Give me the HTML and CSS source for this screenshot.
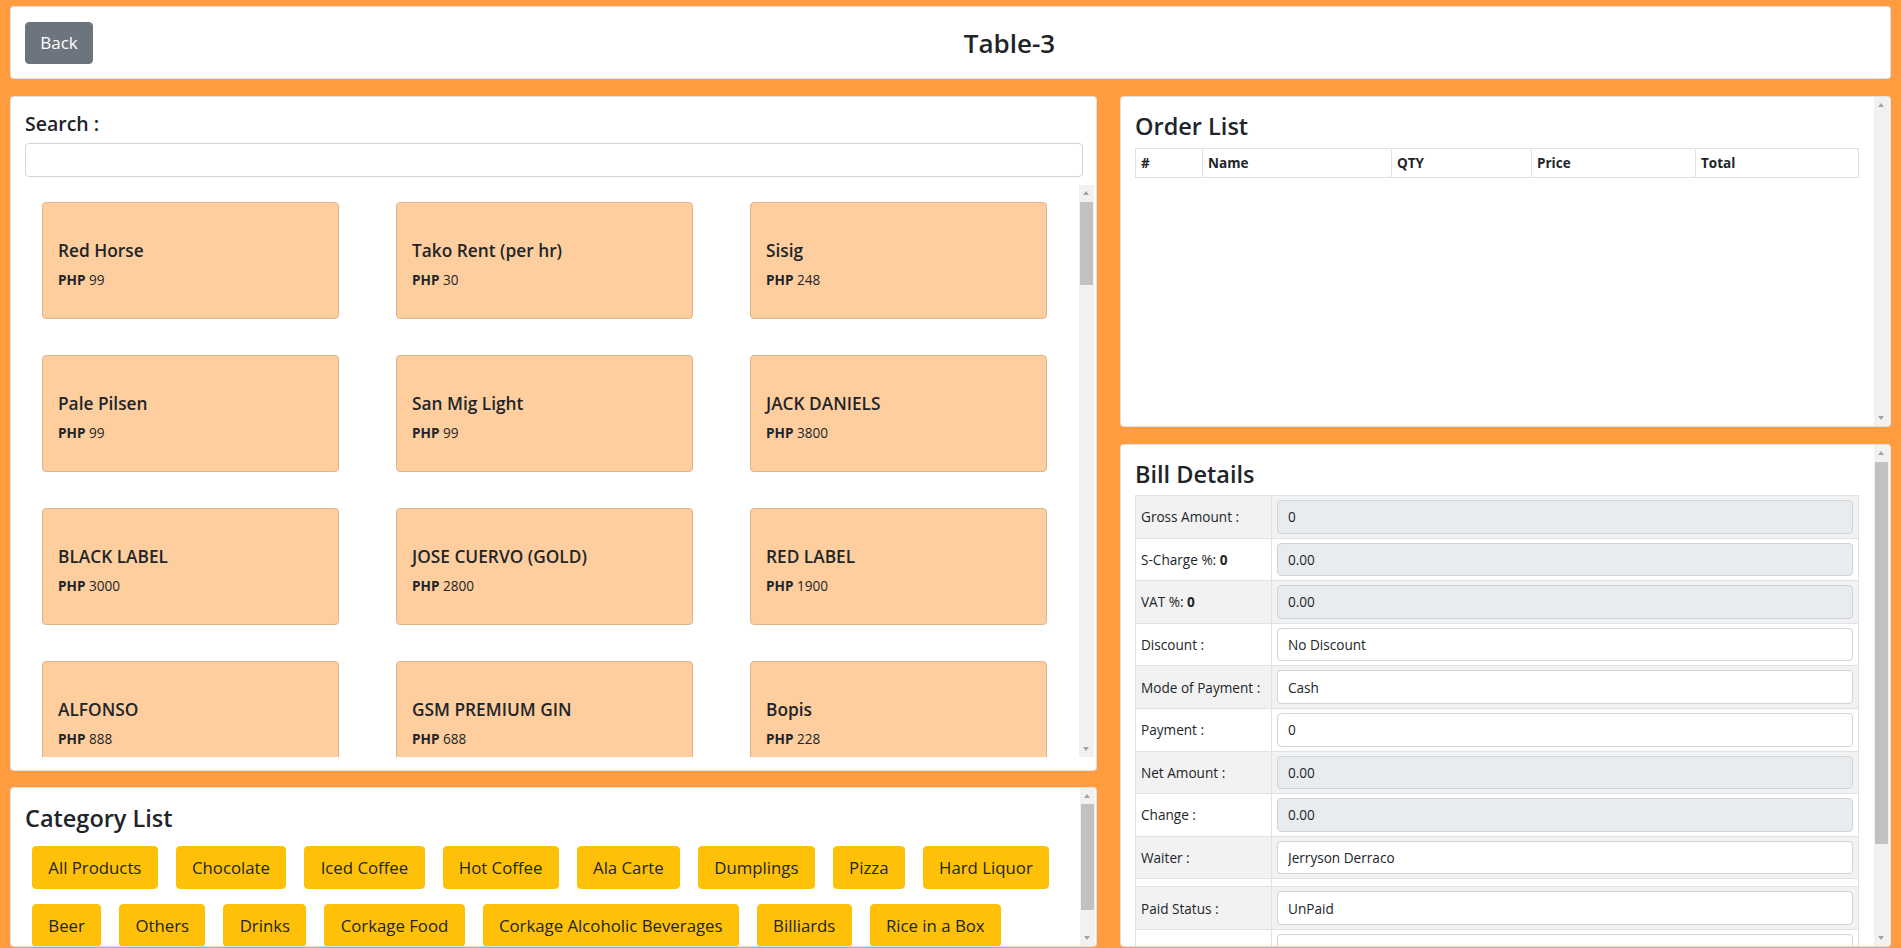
FILE: index.html
```html
<!DOCTYPE html>
<html lang="en">
<head>
<meta charset="utf-8">
<title>Table-3</title>
<link rel="stylesheet" href="styles.css">
</head>
<body>
<div class="page">
  <header class="card topbar">
    <button class="btn-back">Back</button>
    <h3 class="title">Table-3</h3>
  </header>

  <main class="main">
    <div class="col-left">
      <section class="card search-card">
        <label class="search-label">Search :</label>
        <input class="search-input" type="text">
        <div class="products">
          <div class="product-grid">
            <div class="product"><div class="p-name">Red Horse</div><div class="p-price"><b>PHP</b> 99</div></div>
            <div class="product"><div class="p-name">Tako Rent (per hr)</div><div class="p-price"><b>PHP</b> 30</div></div>
            <div class="product"><div class="p-name">Sisig</div><div class="p-price"><b>PHP</b> 248</div></div>
            <div class="product"><div class="p-name">Pale Pilsen</div><div class="p-price"><b>PHP</b> 99</div></div>
            <div class="product"><div class="p-name">San Mig Light</div><div class="p-price"><b>PHP</b> 99</div></div>
            <div class="product"><div class="p-name">JACK DANIELS</div><div class="p-price"><b>PHP</b> 3800</div></div>
            <div class="product"><div class="p-name">BLACK LABEL</div><div class="p-price"><b>PHP</b> 3000</div></div>
            <div class="product"><div class="p-name">JOSE CUERVO (GOLD)</div><div class="p-price"><b>PHP</b> 2800</div></div>
            <div class="product"><div class="p-name">RED LABEL</div><div class="p-price"><b>PHP</b> 1900</div></div>
            <div class="product"><div class="p-name">ALFONSO</div><div class="p-price"><b>PHP</b> 888</div></div>
            <div class="product"><div class="p-name">GSM PREMIUM GIN</div><div class="p-price"><b>PHP</b> 688</div></div>
            <div class="product"><div class="p-name">Bopis</div><div class="p-price"><b>PHP</b> 228</div></div>
          </div>
        </div>
        <div class="vbar vbar-products" aria-hidden="true"><span class="vbar-up"></span><span class="vbar-thumb"></span><span class="vbar-down"></span></div>
      </section>

      <section class="card category-card">
        <h4 class="card-title">Category List</h4>
        <div class="cats">
          <button class="cat">All Products</button>
          <button class="cat">Chocolate</button>
          <button class="cat">Iced Coffee</button>
          <button class="cat">Hot Coffee</button>
          <button class="cat">Ala Carte</button>
          <button class="cat">Dumplings</button>
          <button class="cat">Pizza</button>
          <button class="cat">Hard Liquor</button>
          <button class="cat">Beer</button>
          <button class="cat">Others</button>
          <button class="cat">Drinks</button>
          <button class="cat">Corkage Food</button>
          <button class="cat">Corkage Alcoholic Beverages</button>
          <button class="cat">Billiards</button>
          <button class="cat">Rice in a Box</button>
        </div>
        <div class="vbar vbar-cats" aria-hidden="true"><span class="vbar-up"></span><span class="vbar-thumb"></span><span class="vbar-down"></span></div>
      </section>
    </div>

    <div class="col-right">
      <section class="card order-card">
        <h4 class="card-title">Order List</h4>
        <table class="order-table">
          <thead>
            <tr>
              <th class="c-num">#</th>
              <th class="c-name">Name</th>
              <th class="c-qty">QTY</th>
              <th class="c-price">Price</th>
              <th class="c-total">Total</th>
            </tr>
          </thead>
        </table>
        <div class="vbar vbar-order" aria-hidden="true"><span class="vbar-up"></span><span class="vbar-down"></span></div>
      </section>

      <section class="card bill-card">
        <h4 class="card-title">Bill Details</h4>
        <table class="bill-table">
          <tbody>
            <tr class="odd"><td class="lbl">Gross Amount :</td><td class="val"><input class="field ro" value="0" readonly></td></tr>
            <tr><td class="lbl">S-Charge %: <b>0</b></td><td class="val"><input class="field ro" value="0.00" readonly></td></tr>
            <tr class="odd"><td class="lbl">VAT %: <b>0</b></td><td class="val"><input class="field ro" value="0.00" readonly></td></tr>
            <tr><td class="lbl">Discount :</td><td class="val"><input class="field" value="No Discount"></td></tr>
            <tr class="odd"><td class="lbl">Mode of Payment :</td><td class="val"><input class="field" value="Cash"></td></tr>
            <tr><td class="lbl">Payment :</td><td class="val"><input class="field" value="0"></td></tr>
            <tr class="odd"><td class="lbl">Net Amount :</td><td class="val"><input class="field ro" value="0.00" readonly></td></tr>
            <tr><td class="lbl">Change :</td><td class="val"><input class="field ro" value="0.00" readonly></td></tr>
            <tr class="odd"><td class="lbl">Waiter :</td><td class="val"><input class="field" value="Jerryson Derraco"></td></tr>
            <tr class="empty"><td></td><td></td></tr>
            <tr class="odd"><td class="lbl">Paid Status :</td><td class="val"><input class="field" value="UnPaid"></td></tr>
            <tr><td class="lbl">Customer Name :</td><td class="val"><input class="field" value=""></td></tr>
          </tbody>
        </table>
        <div class="vbar vbar-bill" aria-hidden="true"><span class="vbar-up"></span><span class="vbar-thumb"></span><span class="vbar-down"></span></div>
      </section>
    </div>
  </main>
</div>
</body>
</html>
```

FILE: styles.css
```css
* { box-sizing: border-box; }

html, body {
  margin: 0;
  height: 948px;
  overflow: hidden;
}

body {
  background: #ff9c3f;
  font-family: "Open Sans", "Noto Sans", sans-serif;
  color: #212529;
}

.page {
  padding: 6px 10px 0;
  display: flex;
  flex-direction: column;
  height: 948px;
}

.card {
  position: relative;
  overflow: hidden;
  background: #fff;
  border: 1px solid rgba(0, 0, 0, 0.125);
  border-radius: 4px;
}

/* ---------- drawn scrollbars (overlay) ---------- */
.vbar {
  position: absolute;
  width: 15px;
  background: #f1f1f1;
}
.vbar-up, .vbar-down {
  position: absolute;
  left: 0;
  right: 0;
  height: 17px;
}
.vbar-up { top: 0; }
.vbar-down { bottom: 0; }
.vbar-up::before, .vbar-down::before {
  content: "";
  position: absolute;
  left: 4px;
  border-left: 3.5px solid transparent;
  border-right: 3.5px solid transparent;
}
.vbar-up::before { top: 6px; border-bottom: 4px solid #a3a3a3; }
.vbar-down::before { top: 7px; border-top: 4px solid #a3a3a3; }
.vbar-thumb {
  position: absolute;
  left: 1px;
  right: 1px;
  background: #c1c1c1;
}

.vbar-products { right: 2px; top: 88px; height: 572px; }
.vbar-products .vbar-thumb { top: 17px; height: 83px; }

.vbar-cats { right: 1px; top: 0; bottom: 0; }
.vbar-cats .vbar-thumb { top: 16px; height: 106px; }

.vbar-order { right: 1px; top: 0; bottom: 0; }

.vbar-bill { right: 1px; top: 0; bottom: 0; }
.vbar-bill .vbar-thumb { top: 17px; height: 382px; }

/* ---------- top bar ---------- */
.topbar {
  height: 73px;
  flex: 0 0 auto;
  display: grid;
  grid-template-columns: 68px 1fr;
  align-items: center;
  padding: 0 14px;
}

.btn-back {
  height: 42px;
  width: 68px;
  border: 1px solid #6c757d;
  background: #6c757d;
  color: #fff;
  border-radius: 4px;
  font-family: inherit;
  font-size: 17px;
  padding: 0;
}

.title {
  margin: 0;
  text-align: center;
  padding-left: 50px;
  font-size: 26px;
  font-weight: 600;
  line-height: 36px;
}

/* ---------- main layout ---------- */
.main {
  margin-top: 17px;
  flex: 1 1 auto;
  min-height: 0;
  display: grid;
  grid-template-columns: 1087px 1fr;
  column-gap: 23px;
  padding-bottom: 1px;
}

.col-left, .col-right {
  display: flex;
  flex-direction: column;
  min-height: 0;
}

.card-title {
  margin: 0;
  font-size: 23.5px;
  font-weight: 600;
  line-height: 30px;
}

/* ---------- search card ---------- */
.search-card {
  height: 675px;
  flex: 0 0 auto;
  padding: 13px 13px 13px 14px;
  display: flex;
  flex-direction: column;
}

.search-label {
  display: block;
  font-size: 19.5px;
  font-weight: 600;
  line-height: 28px;
}

.search-input {
  display: block;
  width: 100%;
  height: 34px;
  margin-top: 5px;
  border: 1px solid #ced4da;
  border-radius: 4px;
  font-family: inherit;
  font-size: 14px;
}

.products {
  margin-top: 8px;
  margin-right: 4px;
  height: 572px;
  overflow: hidden;
  padding: 17px 0 0 17px;
}

.product-grid {
  display: grid;
  grid-template-columns: repeat(3, 297px);
  column-gap: 57px;
  row-gap: 36px;
}

.product {
  height: 117px;
  background: #ffce9e;
  border: 1px solid #dfb48b;
  border-radius: 4px;
  padding: 35px 15px 0;
}

.p-name {
  font-size: 17.3px;
  font-weight: 600;
  line-height: 26px;
}

.p-price {
  margin-top: 6px;
  font-size: 13.6px;
  line-height: 20px;
}

/* ---------- category card ---------- */
.category-card {
  margin-top: 16px;
  flex: 1 1 auto;
  min-height: 0;
  padding: 15px 20px 26px 14px;
}

.cats {
  display: flex;
  flex-wrap: wrap;
  column-gap: 18px;
  row-gap: 15px;
  margin-top: 13px;
  padding-left: 7px;
}

.cat {
  height: 43px;
  padding: 0 15.3px;
  background: #ffc107;
  border: 1px solid #ffc107;
  border-radius: 4px;
  color: #212529;
  font-family: inherit;
  font-size: 16.8px;
}

/* ---------- order card ---------- */
.order-card {
  height: 331px;
  flex: 0 0 auto;
  padding: 14px 31px 14px 14px;
}

.order-table, .bill-table {
  width: 100%;
  border-collapse: collapse;
}

.order-table {
  margin-top: 7px;
  border: 1px solid #dee2e6;
}

.order-table th {
  border: 1px solid #dee2e6;
  text-align: left;
  font-size: 13.5px;
  font-weight: 700;
  line-height: 20px;
  padding: 4px 5px;
}

.c-num { width: 67px; }
.c-name { width: 189px; }
.c-qty { width: 140px; }
.c-price { width: 164px; }

/* ---------- bill card ---------- */
.bill-card {
  margin-top: 17px;
  flex: 1 1 auto;
  min-height: 0;
  padding: 14px 31px 14px 14px;
}

.bill-table {
  margin-top: 6px;
  border: 1px solid #dee2e6;
}

.bill-table td {
  border: 1px solid #dee2e6;
  padding: 4px 5px;
  font-size: 13.6px;
  vertical-align: middle;
}

.bill-table td.lbl { width: 136px; white-space: nowrap; }
.bill-table tr.odd td { background: #f2f2f2; }
.bill-table tr.empty td { height: 8px; padding: 0; }

.field {
  display: block;
  width: 100%;
  height: 33.6px;
  border: 1px solid #ced4da;
  border-radius: 4px;
  background: #fff;
  padding: 0 10px;
  font-family: inherit;
  font-size: 13.6px;
  color: #212529;
}

.field.ro { background: #e9ecef; }
```
